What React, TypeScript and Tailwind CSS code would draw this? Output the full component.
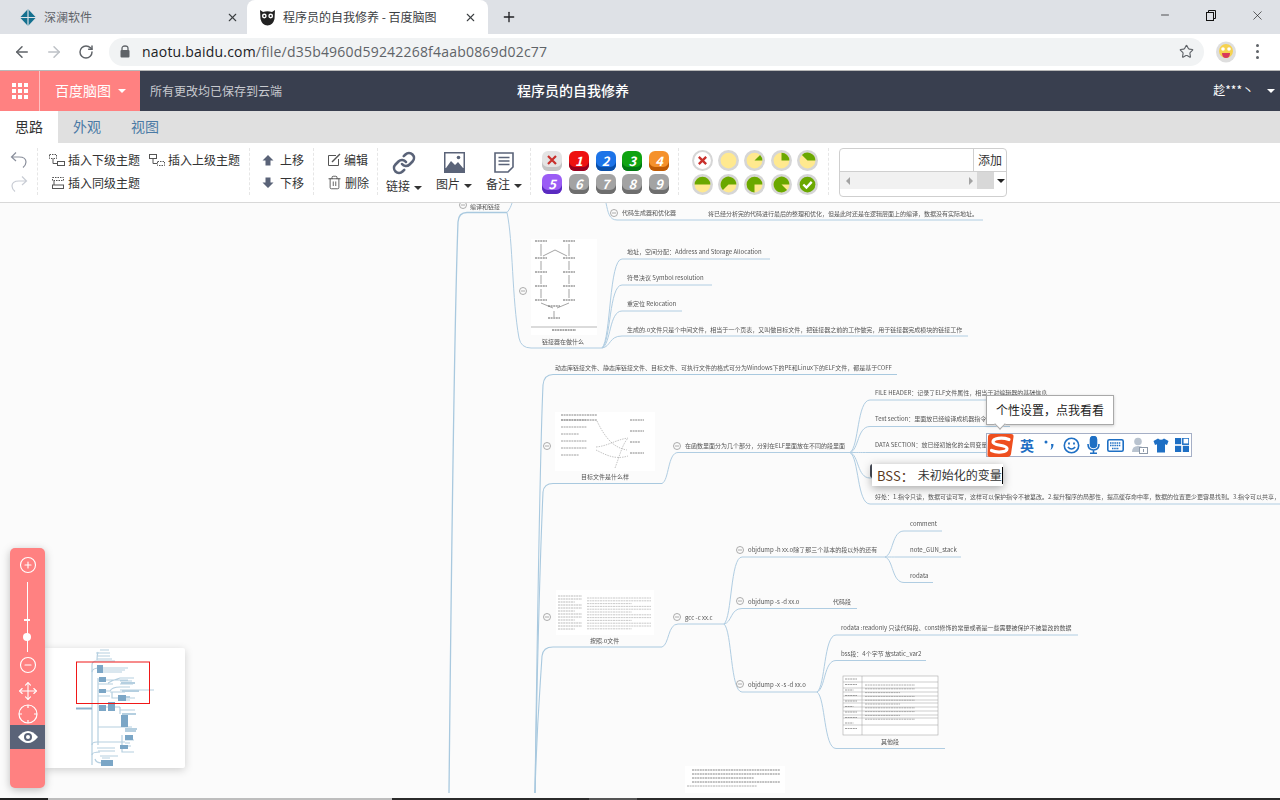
import React from 'react'
import { ArrowLeft, ArrowRight, CircleMinus, CirclePlus, Eye, Link, Minus, Move, Plus, RotateCw, Star, Trash2, X } from 'lucide-react'

const cjk = "font-['Noto_Sans_CJK_SC',sans-serif]"

// branch line: leaves the parent, ends in a horizontal underline
function branch(x0: number, y0: number, x1: number, y1: number, x2: number) {
  const dx = x1 - x0
  const dy = y1 - y0
  return `M${x0} ${y0} C${x0 + dx * 0.45} ${y0 + dy * 0.1} ${x0 + dx * 0.35} ${y1} ${x1} ${y1} L${x2} ${y1}`
}

const lines = [
  'M507 212.5 C510 209 511 206 512 203',
  'M507 212.5 C513 240 512 300 519 338 Q521 348 531 348 L602 348',
  'M606 203 C608 212 609 220 617 220 L983 220',
  branch(602, 348, 622, 259, 770),
  branch(602, 348, 622, 285, 712),
  branch(602, 348, 622, 311, 682),
  branch(602, 348, 622, 336, 968),
  branch(662, 483.5, 678, 452.5, 850),
  branch(850, 452.5, 870, 400, 1052),
  branch(850, 452.5, 870, 426.5, 1010),
  branch(850, 452.5, 870, 452.5, 1050),
  branch(850, 452.5, 870, 478, 900),
  branch(850, 452.5, 870, 504, 1280),
  branch(662, 647, 678, 624, 724),
  branch(724, 624, 742, 557, 885),
  branch(724, 624, 742, 608.5, 857),
  branch(724, 624, 742, 692, 817),
  branch(885, 557, 904, 531, 942),
  branch(885, 557, 904, 557, 961),
  branch(885, 557, 904, 582.5, 933),
  branch(817, 692, 836, 635, 1078),
  branch(817, 692, 836, 660.5, 926),
  branch(817, 692, 836, 748.5, 945),
]

const circles = [
  [463, 205], [614, 213], [523, 291], [547, 446], [677, 446], [547, 617], [677, 617], [740, 550], [740, 601], [740, 684],
]

const dashRows = (x: number, y: number, w: number, n: number, gap: number, color = '#777') =>
  Array.from({ length: n }, (_, i) => (
    <line key={i} x1={x} y1={y + i * gap} x2={x + w * (i % 3 === 2 ? 0.7 : 1)} y2={y + i * gap} stroke={color} strokeWidth="0.8" strokeDasharray="2 0.6" />
  ))

function MapLines() {
  return (
    <svg className="absolute inset-0" width="1280" height="595" viewBox="0 203 1280 595" fill="none">
      <path d="M449 793 C451 600 454 330 458 222 Q458.5 212.5 467 212.5 L507 212.5" stroke="#a9c9df" strokeWidth="1.3" />
      <path d="M535 793 C537 650 540 450 543 385 Q544 374.5 553 374.5 L897 374.5" stroke="#a9c9df" strokeWidth="1.1" />
      <path d="M535 793 C537 680 540 560 543 492 Q544 483.5 553 483.5 L662 483.5" stroke="#a9c9df" strokeWidth="1.1" />
      <path d="M535 793 C537 720 540 690 542 656 Q543 647 553 647 L662 647" stroke="#a9c9df" strokeWidth="1.1" />
      {lines.map((d, i) => (
        <path key={i} d={d} stroke="#b0cde2" strokeWidth="1" />
      ))}
      {circles.map(([cx, cy], i) => (
        <g key={i} stroke="#a3a3a3" strokeWidth="0.9">
          <circle cx={cx} cy={cy} r="3.5" fill="#fbfbfb" />
          <line x1={cx - 2} y1={cy} x2={cx + 2} y2={cy} />
        </g>
      ))}

      {/* linker flow chart */}
      <g className="blur-[0.3px]">
        <rect x="531" y="239" width="66" height="96" fill="#fff" />
        {[[535, 241], [563, 241], [535, 258], [563, 258], [535, 272], [563, 272], [535, 286], [563, 286], [535, 300], [563, 300], [548, 306], [548, 318]].map(([x, y], i) => (
          <line key={i} x1={x} y1={y} x2={x + 12} y2={y} stroke="#666" strokeWidth="1.2" strokeDasharray="2 0.6" />
        ))}
        <path d="M541 244 V256 M541 261 V270 M541 275 V284 M541 289 V298 M569 244 V256 M569 261 V270 M569 275 V284 M569 289 V298 M543 256 L555 250 L567 256 M541 303 L553 308 M569 303 L557 308 M554 311 V317" stroke="#666" strokeWidth="0.6" />
        <line x1="531" y1="327" x2="597" y2="327" stroke="#999" strokeWidth="0.7" />
        <line x1="552" y1="330" x2="576" y2="330" stroke="#555" strokeWidth="1.2" strokeDasharray="2 0.6" />
      </g>

      {/* object file layout */}
      <g className="blur-[0.3px]">
        <rect x="555" y="412" width="100" height="59" fill="#fff" />
        {dashRows(561, 415, 36, 2, 5, '#666')}
        {dashRows(561, 420, 26, 6, 7, '#888')}
        {dashRows(630, 420, 14, 4, 11, '#666')}
        <path d="M597 421 C606 440 615 448 627 450 M596 447 C608 446 615 440 628 438 M596 450 C606 455 615 460 628 456 M615 468 C620 455 622 445 628 438" stroke="#888" strokeWidth="0.5" strokeDasharray="1.5 1" />
      </g>

      {/* section table */}
      <g className="blur-[0.3px]">
        <rect x="556" y="590" width="98" height="45" fill="#fff" />
        {dashRows(558, 596, 24, 12, 3, '#aaa')}
        {dashRows(587, 598, 64, 12, 2.8, '#bbb')}
      </g>

      {/* other sections table */}
      <g className="blur-[0.2px]">
        <rect x="843" y="676" width="95" height="59" fill="#fff" stroke="#aaa" strokeWidth="0.6" />
        <line x1="862" y1="676" x2="862" y2="735" stroke="#999" strokeWidth="0.5" />
        {[682, 688, 692, 696, 700, 703, 707, 711, 715, 718, 725].map((y) => (
          <line key={y} x1="843" y1={y} x2="938" y2={y} stroke="#999" strokeWidth="0.5" />
        ))}
        {dashRows(845, 679, 12, 10, 5.5, '#888')}
        {dashRows(865, 685, 50, 10, 3.8, '#999')}
      </g>

      {/* page cut by the bottom */}
      <rect x="685" y="766" width="100" height="27" fill="#fff" />
      {dashRows(692, 770, 88, 4, 4, '#666')}
      {dashRows(687, 786, 70, 1, 4, '#999')}
    </svg>
  )
}

function Label({ className, children }: { className: string; children: React.ReactNode }) {
  return <div className={`absolute -translate-y-1/2 whitespace-nowrap text-[6px] leading-[8px] text-[#555] blur-[0.25px] ${className}`}>{children}</div>
}

function Labels() {
  return (
    <>
      <Label className="left-[470px] top-[4px]">编译和链接</Label>
      <Label className="left-[622px] top-[10px]">代码生成器和优化器</Label>
      <Label className="left-[708px] top-[11px]">将已经分析完的代码进行最后的整理和优化，但是此时还是在逻辑层面上的编译，数据没有实际地址。</Label>
      <Label className="left-[542px] top-[139px]">链接器在做什么</Label>
      <Label className="left-[627px] top-[49px]">地址，空间分配：Address and Storage Allocation</Label>
      <Label className="left-[627px] top-[75px]">符号决议 Symbol resolution</Label>
      <Label className="left-[627px] top-[101px]">重定位 Relocation</Label>
      <Label className="left-[627px] top-[127px]">生成的.o文件只是个中间文件，相当于一个页表，又叫做目标文件，把链接器之前的工作做完，用于链接器完成模块的链接工作</Label>
      <Label className="left-[555px] top-[165px]">动态库链接文件、静态库链接文件、目标文件、可执行文件的格式可分为Windows下的PE和Linux下的ELF文件，都是基于COFF</Label>
      <Label className="left-[581px] top-[274px]">目标文件是什么样</Label>
      <Label className="left-[685px] top-[243px]">在函数里面分为几个部分，分别在ELF里面放在不同的段里面</Label>
      <Label className="left-[875px] top-[190px]">FILE HEADER：记录了ELF文件属性，相当于对编辑器的基础信息</Label>
      <Label className="left-[875px] top-[216px]">Text section：里面放已经编译成机器指令</Label>
      <Label className="left-[875px] top-[242px]">DATA SECTION：放已经初始化的全局变量</Label>
      <Label className="left-[875px] top-[294px]">好处：1.指令只读，数据可读可写，这样可以保护指令不被篡改。2.提升程序的局部性，提高缓存命中率，数据的位置更少更容易找到。3.指令可以共享，</Label>
      <Label className="left-[590px] top-[438px]">按照.o文件</Label>
      <Label className="left-[685px] top-[415px]">gcc -c xx.c</Label>
      <Label className="left-[748px] top-[347px]">objdump -h xx.o除了那三个基本的段以外的还有</Label>
      <Label className="left-[748px] top-[399px]">objdump -s -d xx.o</Label>
      <Label className="left-[833px] top-[399px]">代码段</Label>
      <Label className="left-[748px] top-[482px]">objdump -x -s -d xx.o</Label>
      <Label className="left-[910px] top-[321px]">comment</Label>
      <Label className="left-[910px] top-[347px]">note_GUN_stack</Label>
      <Label className="left-[910px] top-[373px]">rodata</Label>
      <Label className="left-[841px] top-[425px]">rodata :readonly 只读代码段、const修饰的常量或者是一些需要被保护不被篡改的数据</Label>
      <Label className="left-[841px] top-[451px]">bss段：4个字节 放static_var2</Label>
      <Label className="left-[881px] top-[539px]">其他段</Label>
    </>
  )
}

function SogouBar() {
  return (
    <div className="absolute left-[986px] top-[230px] flex h-[24px] w-[206px] items-center border border-[#a5afc6] bg-white text-[#1e6fc4]">
      <svg className="absolute -left-px -top-[1px]" width="29" height="25" viewBox="0 0 29 25">
        <path d="M5 1 H25 Q28 1 27.5 4 L25 21 Q24.5 24 21 24 H4 Q1 24 1.5 21 L2 4 Q2 1 5 1 Z" fill="#ee4f1f" />
        <path d="M23 6.5 C16 4 7 5 7 9 C7 13 21 11.5 21 15.5 C21 19.5 11 20 5.5 17.5" fill="none" stroke="#fff" strokeWidth="3.2" strokeLinecap="round" />
      </svg>
      <span className="ml-[33px] text-[14px] leading-none font-bold">英</span>
      <svg className="ml-[10px]" width="10" height="12" viewBox="0 0 10 12" fill="currentColor">
        <circle cx="2" cy="3" r="1.5" />
        <path d="M7 5 H9.5 Q9.5 9 6.5 11 Q8 8 7 5 Z" />
      </svg>
      <svg className="ml-[9px]" width="17" height="17" viewBox="0 0 17 17" fill="none" stroke="currentColor" strokeWidth="1.6">
        <circle cx="8.5" cy="8.5" r="7.2" />
        <path d="M4.8 10 Q8.5 14 12.2 10" />
        <path d="M6 5.5 V7.5 M11 5.5 V7.5" strokeWidth="1.8" />
      </svg>
      <svg className="ml-[7px]" width="13" height="18" viewBox="0 0 13 18" fill="none" stroke="currentColor" strokeWidth="1.6">
        <rect x="3.5" y="0.5" width="6" height="11" rx="3" fill="currentColor" />
        <path d="M1 8 Q1 14 6.5 14 Q12 14 12 8 M6.5 14 V17 M3 17.2 H10" />
      </svg>
      <svg className="ml-[7px]" width="17" height="13" viewBox="0 0 17 13">
        <rect x="0.8" y="0.8" width="15.4" height="11.4" rx="1.5" fill="none" stroke="currentColor" strokeWidth="1.6" />
        <path d="M3 4 H14 M3 6.5 H14 M5 9.5 H12" stroke="currentColor" strokeWidth="1.4" strokeDasharray="1.5 0.7" />
      </svg>
      <svg className="ml-[7px]" width="17" height="17" viewBox="0 0 17 17">
        <circle cx="7" cy="4.5" r="3.8" fill="#b9c3cf" />
        <path d="M1 15 Q1 9 7 9 Q11 9 12 11 H8 V15 Z" fill="#b9c3cf" />
        <rect x="8.5" y="10.5" width="8" height="6" fill="#fff" stroke="#8d99a8" strokeWidth="1" />
        <path d="M12.5 12 V15" stroke="#8d99a8" />
      </svg>
      <svg className="ml-[5px]" width="16" height="15" viewBox="0 0 16 15" fill="currentColor">
        <path d="M5 0.5 L0.5 3 L2 7 L4 6.2 V14.5 H12 V6.2 L14 7 L15.5 3 L11 0.5 Q8 3 5 0.5 Z" />
      </svg>
      <svg className="ml-[6px]" width="14" height="14" viewBox="0 0 14 14" fill="currentColor">
        <rect x="0" y="0" width="6.2" height="6.2" />
        <rect x="7.8" y="0" width="6.2" height="6.2" fill="none" stroke="currentColor" strokeWidth="1.5" />
        <rect x="0" y="7.8" width="6.2" height="6.2" />
        <rect x="7.8" y="7.8" width="6.2" height="6.2" />
      </svg>
    </div>
  )
}

function Minimap() {
  return (
    <div className="absolute left-[45px] top-[445px] h-[120px] w-[140px] rounded-r-[2px] bg-white shadow-[0_2px_8px_rgba(0,0,0,0.18)]">
      <svg width="140" height="120" viewBox="45 648 140 120" fill="none">
        <g stroke="#b5cfe0" strokeWidth="1.2">
          <path d="M92 765 V665 Q92 661 97 661 H115 M96 653 H110 M97 656 H110 M100 650 H109 M97 659 H112" />
          <path d="M98 652 Q97 655 97 660" />
          <path d="M92 672 Q92 668 100 668 H128 M103 670 H125 M103 672 H122 M98 678 V745" />
          <path d="M98 680 H128 M98 684 H113 M108 683 Q113 680 120 678 H134 M120 681 H132 M120 684 H133 M120 687 H130 M120 690 H154" />
          <path d="M98 691 H110 M110 691 Q112 687 120 687 M98 696 H110" />
          <path d="M110 692 H125 M112 692 V698 H135 M120 700 H130" />
          <path d="M98 707 H120 M120 707 V714 M120 710 H135" />
          <path d="M98 727 H132 M122 735 V752 H134 M125 740 H134 M125 743 H130 M123 746 H131" />
          <path d="M92 745 Q92 742 97 742 H125 M97 748 H115 M98 751 H115 M100 756 H118 M102 758 H110" />
          <path d="M92 755 Q92 752 100 752 M95 759 Q96 763 102 763" />
        </g>
        <g stroke="#b5cfe0" strokeWidth="2">
          <path d="M121 683 H135 M122 691 H139 M122 697 H130 M122 714 H136 M125 729 H137 M125 731 H136" />
        </g>
        <path d="M76 708.5 H92" stroke="#8fb2cc" strokeWidth="2" />
        <g fill="#7ba6c6">
          <rect x="97" y="665" width="6" height="8" />
          <rect x="99" y="677" width="7" height="5" />
          <rect x="99" y="689" width="7" height="4" />
          <rect x="99" y="705" width="7" height="6" />
          <rect x="108" y="702" width="7" height="9" />
          <rect x="121" y="715" width="7" height="12" />
          <rect x="118" y="695" width="8" height="6" />
          <rect x="125" y="735" width="8" height="5" />
          <rect x="120" y="745" width="8" height="4" />
          <rect x="101" y="760" width="12" height="6" />
        </g>
        <rect x="76.5" y="662" width="73" height="41.5" stroke="#f01818" strokeWidth="1" />
      </svg>
    </div>
  )
}

function NavPanel() {
  return (
    <div className="absolute left-[10px] top-[345px] flex h-[240px] w-[35px] flex-col items-center rounded-[5px] bg-[#ff8181] text-white shadow-[0_2px_8px_rgba(0,0,0,0.25)]">
      <CirclePlus size={18} strokeWidth={1.5} className="mt-[8px]" />
      <div className="relative mt-[8px] h-[70px] w-[1.5px] bg-white">
        <div className="absolute -left-[2.5px] top-[37px] h-[1.5px] w-[6px] bg-white" />
        <div className="absolute -left-[3.5px] top-[51px] h-[8px] w-[8px] rounded-full bg-white" />
      </div>
      <CircleMinus size={18} strokeWidth={1.5} className="mt-[4px]" />
      <Move size={20} strokeWidth={1.3} className="mt-[7px]" />
      <svg className="mt-[3px]" width="20" height="20" viewBox="0 0 20 20" fill="none" stroke="#fff" strokeWidth="1.2">
        <circle cx="10" cy="10" r="9" />
        <path d="M10 1 V4 M10 16 V19 M1 10 H4 M16 10 H19" />
      </svg>
      <div className="mt-[1px] flex h-[24px] w-full items-center justify-center bg-[#5a6378]">
        <svg width="22" height="14" viewBox="0 0 22 14">
          <path d="M1 7 Q11 -5 21 7 Q11 19 1 7 Z" fill="#fff" />
          <circle cx="11" cy="7" r="4" fill="#5a6378" />
          <circle cx="11" cy="7" r="2" fill="#fff" />
        </svg>
      </div>
    </div>
  )
}

function BrowserTabs() {
  return (
    <div className="flex h-[34px] items-end bg-[#dee1e6] text-[12px] text-[#3c4043]">
      <div className="flex h-[34px] w-[247px] items-center pl-[20px]">
        <svg width="16" height="17" viewBox="0 0 16 17">
          <path d="M8 0 L16 8.5 L8 17 L0 8.5 Z" fill="#14708f" />
          <path d="M8 0 V17 M0 8.5 H16" stroke="#dee1e6" strokeWidth="1.2" />
        </svg>
        <span className="ml-[8px] text-[#5f6368]">深澜软件</span>
        <X size={13} strokeWidth={2} className="ml-[134px] text-[#3c4043]" />
      </div>
      <div className="flex h-[34px] w-[241px] items-center rounded-t-[8px] bg-white pl-[12px] text-[#3c4043]">
        <svg width="17" height="17" viewBox="0 0 17 17">
          <path d="M1 1 L4 3 Q8.5 1.5 13 3 L16 1 L15.5 10 Q14 16 8.5 16.5 Q3 16 1.5 10 Z" fill="#222" />
          <circle cx="5.3" cy="7" r="2.4" fill="#fff" />
          <circle cx="11.7" cy="7" r="2.4" fill="#fff" />
          <circle cx="5.3" cy="7" r="1" fill="#222" />
          <circle cx="11.7" cy="7" r="1" fill="#222" />
        </svg>
        <span className="ml-[7px] whitespace-nowrap">程序员的自我修养 - 百度脑图</span>
        <X size={13} strokeWidth={2} className="ml-[27px]" />
      </div>
      <div className="flex h-[34px] items-center pl-[13px]">
        <Plus size={16} strokeWidth={2} className="text-[#202124]" />
      </div>
      <div className="ml-auto flex h-[34px] items-start text-[#111]">
        <div className="flex h-[30px] w-[46px] items-center justify-center">
          <Minus size={12} strokeWidth={1.4} />
        </div>
        <div className="flex h-[30px] w-[46px] items-center justify-center">
          <svg width="10" height="11" viewBox="0 0 10 11" fill="none" stroke="#111">
            <rect x="0.5" y="2.5" width="7" height="8" />
            <path d="M2.5 2.5 V0.5 H9.5 V8.5 H7.5" />
          </svg>
        </div>
        <div className="flex h-[30px] w-[46px] items-center justify-center">
          <X size={15} strokeWidth={1} />
        </div>
      </div>
    </div>
  )
}

function AddressBar() {
  return (
    <div className="flex h-[37px] items-center border-b border-[#b8b8b8] bg-white pb-[1px] text-[#5f6368]">
      <ArrowLeft size={18} strokeWidth={2} className="ml-[13px]" />
      <ArrowRight size={18} strokeWidth={2} className="ml-[14px] text-[#bdc1c6]" />
      <RotateCw size={16} strokeWidth={2.2} className="ml-[15px]" />
      <div className="ml-[15px] flex h-[28px] w-[1095px] items-center rounded-full bg-[#f1f3f4] pl-[11px]">
        <svg width="10" height="13" viewBox="0 0 10 13" fill="#5f6368">
          <path d="M2 5 V3.5 Q2 1 5 1 Q8 1 8 3.5 V5" fill="none" stroke="#5f6368" strokeWidth="1.3" />
          <rect x="0.5" y="5" width="9" height="7.5" rx="1" />
        </svg>
        <span className="ml-[12px] whitespace-nowrap font-['Open_Sans',sans-serif] text-[14px] tracking-[0.2px] text-[#5f6368]">
          <span className="text-[#202124]">naotu.baidu.com</span>/file/d35b4960d59242268f4aab0869d02c77
        </span>
        <Star size={15} strokeWidth={1.8} className="ml-auto mr-[10px]" />
      </div>
      <svg className="ml-[12px]" width="20" height="22" viewBox="0 0 20 22">
        <ellipse cx="10" cy="11" rx="10" ry="10.5" fill="#dedede" />
        <circle cx="10" cy="10" r="7" fill="#f6d24f" />
        <circle cx="7" cy="8" r="1.8" fill="#fff" />
        <circle cx="13" cy="8" r="1.8" fill="#fff" />
        <path d="M6 12 H14 Q14 17 10 17 Q6 17 6 12 Z" fill="#d9385c" />
      </svg>
      <div className="ml-[20px] flex flex-col gap-[3px]">
        <div className="h-[3px] w-[3px] rounded-full bg-[#5f6368]" />
        <div className="h-[3px] w-[3px] rounded-full bg-[#5f6368]" />
        <div className="h-[3px] w-[3px] rounded-full bg-[#5f6368]" />
      </div>
    </div>
  )
}

function AppHeader() {
  return (
    <div className="flex h-[40px] items-center bg-[#393f4f] text-white">
      <div className="flex h-full w-[140px] items-center bg-[#ff8181]">
        <div className="flex h-full w-[40px] items-center justify-center border-r border-[#ffc0c0]">
          <div className="grid grid-cols-3 gap-[2px]">
            {Array.from({ length: 9 }, (_, i) => (
              <div key={i} className="h-[4px] w-[4px] bg-white" />
            ))}
          </div>
        </div>
        <span className="ml-[15px] pb-[2px] text-[14px]">百度脑图</span>
        <span className="ml-[7px] h-0 w-0 border-x-[4px] border-t-[4px] border-x-transparent border-t-white" />
      </div>
      <span className="ml-[10px] w-[367px] text-[12px] text-[#c8cad0]">所有更改均已保存到云端</span>
      <span className="pb-[2px] text-[14px] font-medium">程序员的自我修养</span>
      <span className="ml-auto pb-[2px] text-[12px]">趁***丶</span>
      <span className="ml-[13px] mr-[5px] h-0 w-0 border-x-[4px] border-t-[4px] border-x-transparent border-t-white" />
    </div>
  )
}

function ModeTabs() {
  return (
    <div className="flex h-[32px] items-center bg-[#e0e0e0] pb-[2px] text-[14px] text-[#4a7aa5]">
      <div className="-mb-[2px] flex h-[32px] w-[58px] items-center justify-center bg-white pb-[2px] text-[#333]">思路</div>
      <span className="ml-[15px]">外观</span>
      <span className="ml-[30px]">视图</span>
    </div>
  )
}

function Caret() {
  return <span className="ml-[4px] inline-block h-0 w-0 border-x-[4px] border-t-[4px] border-x-transparent border-t-[#333] align-middle" />
}

function InsertIcon({ kind }: { kind: 'child' | 'parent' | 'sibling' }) {
  if (kind === 'child')
    return (
      <svg width="16" height="12" viewBox="0 0 16 12" fill="none" stroke="#555">
        <path d="M0.5 0.5 H7.5 V4.5 H0.5 Z" strokeDasharray="1.5 1" />
        <rect x="8.5" y="7.5" width="7" height="4" />
        <path d="M4 5 V9.5 H8" />
      </svg>
    )
  if (kind === 'parent')
    return (
      <svg width="16" height="12" viewBox="0 0 16 12" fill="none" stroke="#555">
        <rect x="0.5" y="0.5" width="7" height="4" />
        <path d="M8.5 7.5 H15.5 V11.5 H8.5 Z" strokeDasharray="1.5 1" />
        <path d="M4 5 V9.5 H8" />
      </svg>
    )
  return (
    <svg width="12" height="12" viewBox="0 0 12 12" fill="none" stroke="#555">
      <path d="M0.5 0.5 H11.5 V3.5 H0.5 Z" strokeDasharray="1.5 1" />
      <rect x="0.5" y="8" width="11" height="3.5" />
      <path d="M2 4 V8" />
    </svg>
  )
}

const priorityIcons = [
  { label: '', cls: 'bg-[#e4e4e4] shadow-[inset_0_-4px_0_#c4c4c4]' },
  { label: '1', cls: 'bg-[#ee1111] shadow-[inset_0_-4px_0_#98001f]' },
  { label: '2', cls: 'bg-[#1d74e8] shadow-[inset_0_-4px_0_#0a4fa8]' },
  { label: '3', cls: 'bg-[#0fa311] shadow-[inset_0_-4px_0_#007a12]' },
  { label: '4', cls: 'bg-[#f5912c] shadow-[inset_0_-4px_0_#bf5b05]' },
  { label: '5', cls: 'bg-[#9b5df5] shadow-[inset_0_-4px_0_#5a2bc0]' },
  { label: '6', cls: 'bg-[#a3a3a3] shadow-[inset_0_-4px_0_#6e6e6e]' },
  { label: '7', cls: 'bg-[#a3a3a3] shadow-[inset_0_-4px_0_#6e6e6e]' },
  { label: '8', cls: 'bg-[#a3a3a3] shadow-[inset_0_-4px_0_#6e6e6e]' },
  { label: '9', cls: 'bg-[#a3a3a3] shadow-[inset_0_-4px_0_#6e6e6e]' },
]

function Cross({ size }: { size: number }) {
  return (
    <svg width={size} height={size} viewBox="0 0 10 10" stroke="#c9302c" strokeWidth="2.2">
      <path d="M1 1 L9 9 M9 1 L1 9" />
    </svg>
  )
}

// green share of the pie, always ending at 3 o'clock
function pie(eighths: number) {
  const a = Math.PI * 2 * (eighths / 8)
  const x = 10 + 7.5 * Math.cos(-a)
  const y = 10 + 7.5 * Math.sin(-a)
  return `M10 10 L${x} ${y} A7.5 7.5 0 ${eighths > 4 ? 1 : 0} 1 17.5 10 Z`
}

function ProgressIcon({ step }: { step: number }) {
  return (
    <svg width="21" height="21" viewBox="0 0 20 20">
      <circle cx="10" cy="10" r="10" fill="#d6d6d6" />
      {step === -1 && (
        <>
          <circle cx="10" cy="10" r="8" fill="#fff" />
          <path d="M6.5 6.5 L13.5 13.5 M13.5 6.5 L6.5 13.5" stroke="#c9302c" strokeWidth="2.2" />
        </>
      )}
      {step >= 0 && step < 8 && (
        <>
          <circle cx="10" cy="10" r="7.5" fill="#ffe98f" />
          {step > 0 && <path d={pie(step)} fill="#6aa800" />}
        </>
      )}
      {step === 8 && (
        <>
          <circle cx="10" cy="10" r="7.5" fill="#6aa800" />
          <path d="M6 10 L9 13 L14 7.5" fill="none" stroke="#fff" strokeWidth="2.2" />
        </>
      )}
    </svg>
  )
}

function Toolbar() {
  return (
    <div className="flex h-[60px] border-b border-[#d8d8d8] bg-white pt-[5px] text-[12px] text-[#333]">
      <div className="flex h-[47px] w-[38px] flex-col items-center border-r border-dashed border-[#e6e6e6] pt-[3px]">
        <svg width="18" height="18" viewBox="0 0 18 18" fill="none" stroke="#8a8f9c" strokeWidth="1.2">
          <path d="M6 1.5 L1.5 6 L6 10 M1.5 6 H9 Q16 6 16 11 Q16 14 13 16.5" />
        </svg>
        <svg className="mt-[6px]" width="18" height="18" viewBox="0 0 18 18" fill="none" stroke="#c8ccd4" strokeWidth="1.2">
          <path d="M12 1.5 L16.5 6 L12 10 M16.5 6 H9 Q2 6 2 11 Q2 14 5 16.5" />
        </svg>
      </div>
      <div className="h-[47px] w-[212px] border-r border-dashed border-[#e6e6e6]">
        <div className="flex h-[23px] items-center">
          <div className="ml-[11px] flex w-[19px]"><InsertIcon kind="child" /></div>
          <span>插入下级主题</span>
          <div className="ml-[9px] flex w-[19px]"><InsertIcon kind="parent" /></div>
          <span>插入上级主题</span>
        </div>
        <div className="flex h-[23px] items-center">
          <div className="ml-[14px] flex w-[16px]"><InsertIcon kind="sibling" /></div>
          <span>插入同级主题</span>
        </div>
      </div>
      <div className="h-[47px] w-[64px] border-r border-dashed border-[#e6e6e6] pl-[12px]">
        <div className="flex h-[23px] items-center">
          <svg className="mr-[6px]" width="12" height="12" viewBox="0 0 12 12" fill="#5a6378"><path d="M6 1 L11.5 6.5 H8.5 V11.5 H3.5 V6.5 H0.5 Z" /></svg>
          <span>上移</span>
        </div>
        <div className="flex h-[23px] items-center">
          <svg className="mr-[6px]" width="12" height="12" viewBox="0 0 12 12" fill="#5a6378"><path d="M6 11 L11.5 5.5 H8.5 V0.5 H3.5 V5.5 H0.5 Z" /></svg>
          <span>下移</span>
        </div>
      </div>
      <div className="h-[47px] w-[64px] border-r border-dashed border-[#e6e6e6] pl-[13px]">
        <div className="flex h-[23px] items-center">
          <svg className="mr-[3px]" width="14" height="14" viewBox="0 0 14 14" fill="none" stroke="#555">
            <path d="M9 2.5 H1.5 V12.5 H11.5 V6" />
            <path d="M5 9 L13 1" strokeWidth="1.4" />
          </svg>
          <span>编辑</span>
        </div>
        <div className="flex h-[23px] items-center">
          <Trash2 size={15} strokeWidth={1.2} className="mr-[3px] text-[#333]" />
          <span>删除</span>
        </div>
      </div>
      <div className="flex h-[47px] w-[153px] border-r border-dashed border-[#e6e6e6] pl-[1px] pt-[1px]">
        <div className="flex w-[50px] flex-col items-center">
          <Link size={24} strokeWidth={2.6} className="mt-[2px] text-[#5a6378]" />
          <span className="mt-[2px] whitespace-nowrap">链接<Caret /></span>
        </div>
        <div className="flex w-[50px] flex-col items-center">
          <svg className="mt-[3px]" width="21" height="21" viewBox="0 0 21 21">
            <rect x="0.75" y="0.75" width="19.5" height="19.5" fill="#fff" stroke="#5a6378" strokeWidth="1.5" />
            <rect x="0" y="16" width="21" height="5" fill="#5a6378" />
            <path d="M2 16 L7 9 L11 13 L14 10 L19 16 Z" fill="#5a6378" />
            <circle cx="14.5" cy="5.5" r="1.8" fill="#5a6378" />
          </svg>
          <span className="mt-[2px] whitespace-nowrap">图片<Caret /></span>
        </div>
        <div className="flex w-[50px] flex-col items-center">
          <svg className="mt-[3px]" width="20" height="21" viewBox="0 0 20 21" fill="none" stroke="#5a6378">
            <path d="M1 1 H19 V15 L14 20 H1 Z" strokeWidth="1.6" />
            <path d="M4.5 5.5 H15.5 M4.5 9 H15.5 M4.5 12.5 H15.5" strokeWidth="1.6" />
          </svg>
          <span className="mt-[2px] whitespace-nowrap">备注<Caret /></span>
        </div>
      </div>
      <div className="h-[47px] w-[148px] border-r border-dashed border-[#e6e6e6] pl-[11px] pt-[3px]">
        <div className="grid w-[128px] grid-cols-5 gap-x-[6px] gap-y-[3px]">
          {priorityIcons.map((p, i) => (
            <div key={i} className={`flex h-[20px] w-[20px] items-center justify-center rounded-[6px] pb-[2px] text-[13px] leading-none font-bold italic text-white ${p.cls}`}>
              {p.label || <Cross size={10} />}
            </div>
          ))}
        </div>
      </div>
      <div className="h-[47px] w-[150px] border-r border-dashed border-[#e6e6e6] pl-[13px] pt-[2px]">
        <div className="grid w-[126px] grid-cols-5 gap-x-[5px] gap-y-[3px]">
          {[-1, 0, 1, 2, 3, 4, 5, 6, 7, 8].map((s) => (
            <ProgressIcon key={s} step={s} />
          ))}
        </div>
      </div>
      <div className="ml-[10px] flex h-[49px] w-[168px] flex-col rounded-[4px] border border-[#cfcfcf]">
        <div className="flex h-[23px] border-b border-[#cfcfcf]">
          <div className="flex-1" />
          <div className="flex w-[33px] items-center justify-center border-l border-[#cfcfcf] text-[#333]">添加</div>
        </div>
        <div className="flex h-[17px] items-center">
          <div className="flex h-full w-[154px] items-center bg-[#f1f1f1] pl-[6px]">
            <span className="h-0 w-0 border-y-[4px] border-r-[4px] border-y-transparent border-r-[#a3a3a3]" />
            <span className="ml-[119px] h-0 w-0 border-y-[4px] border-l-[4px] border-y-transparent border-l-[#a3a3a3]" />
            <div className="ml-auto h-full w-[17px] bg-[#d8d8d8]" />
          </div>
          <span className="ml-[3px] h-0 w-0 border-x-[4px] border-t-[4px] border-x-transparent border-t-[#222]" />
        </div>
      </div>
    </div>
  )
}

export default function App() {
  return (
    <div className={`h-[800px] w-[1280px] overflow-hidden ${cjk}`}>
      <BrowserTabs />
      <AddressBar />
      <AppHeader />
      <ModeTabs />
      <Toolbar />
      <div className="relative h-[595px] overflow-hidden bg-[#fbfbfb]">
        <MapLines />
        <Labels />
        {/* collapse mark showing behind the node being edited */}
        <div className="absolute left-[870px] top-[261px] h-[14px] w-[6px] rounded-l-[3px] border-l-2 border-[#4a4f5a]" />
        <div className="absolute left-[872px] top-[261px] flex h-[22px] w-[131px] items-center whitespace-nowrap bg-white pl-[5px] text-[12px] leading-none text-[#333] shadow-[0_2px_10px_rgba(0,0,0,0.35)]">
          <span className="mr-[4px] text-[13px] text-[#5c3a1e]">BSS：</span>
          未初始化的变量
          <span className="h-[17px] w-px bg-black" />
        </div>
        <div className="absolute left-[986px] top-[192px] flex h-[30px] w-[128px] items-center border border-[#a9a9a9] bg-white pl-[9px] text-[12px] leading-none whitespace-nowrap text-[#222] shadow-[0_1px_3px_rgba(0,0,0,0.2)]">
          个性设置，点我看看
          <div className="absolute left-[9px] top-[24px] h-[8px] w-[8px] rotate-45 border-r border-b border-[#a9a9a9] bg-white" />
        </div>
        <SogouBar />
        <Minimap />
        <NavPanel />
      </div>
      <div className="flex h-[2px] bg-[#2b2b2b]">
        <div className="w-[48px] bg-[#222]" />
        <div className="w-[344px] bg-[#bdbdbd]" />
        <div className="w-[197px]" />
        <div className="w-[48px] bg-[#555]" />
      </div>
    </div>
  )
}
